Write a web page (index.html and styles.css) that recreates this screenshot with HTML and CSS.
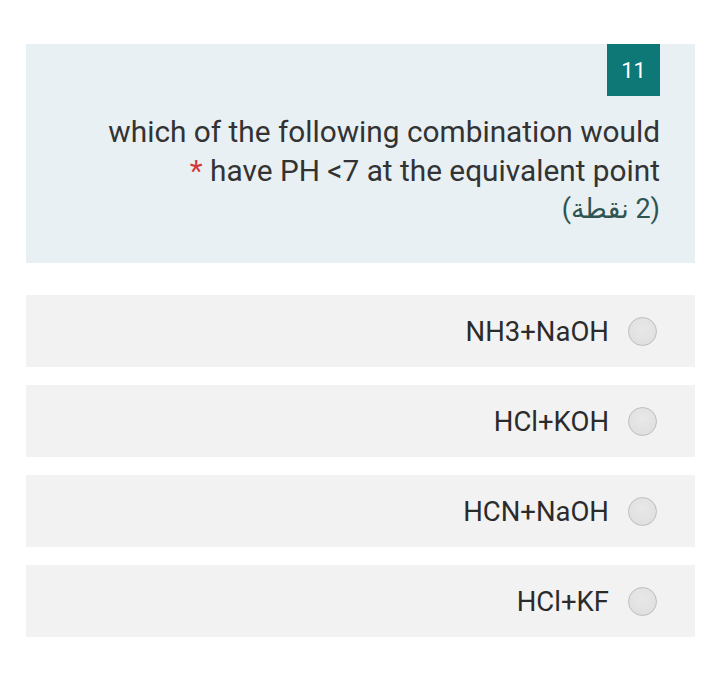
FILE: index.html
```html
<!DOCTYPE html>
<html lang="en">
<head>
<meta charset="utf-8">
<link rel="stylesheet" href="styles.css">
</head>
<body>
<div class="page">
  <section class="question">
    <div class="badge">11</div>
    <div class="qtext">
      <div class="line">which of the following combination would</div>
      <div class="line"><span class="req">*</span> have PH &lt;7 at the equivalent point</div>
      <div class="line points" dir="rtl">(2 نقطة)</div>
    </div>
  </section>
  <div class="options">
    <label class="option"><span class="otext">NH3+NaOH</span><span class="radio"></span></label>
    <label class="option"><span class="otext">HCl+KOH</span><span class="radio"></span></label>
    <label class="option"><span class="otext">HCN+NaOH</span><span class="radio"></span></label>
    <label class="option"><span class="otext">HCl+KF</span><span class="radio"></span></label>
  </div>
</div>
</body>
</html>
```

FILE: styles.css
```css
html, body {
  margin: 0;
  padding: 0;
  background: #ffffff;
}
body {
  font-family: Roboto, "Noto Sans", "DejaVu Sans", sans-serif;
  color: #333333;
}
.page {
  padding: 44px 25px 0 26px;
  width: 669px;
}
.question {
  background: #e8f0f3;
  height: 219px;
  box-sizing: border-box;
  padding-right: 35px;
  display: flex;
  flex-direction: column;
  align-items: flex-end;
}
.badge {
  width: 53px;
  height: 52px;
  background: #0e7876;
  color: #ffffff;
  font-size: 22px;
  display: flex;
  align-items: center;
  justify-content: center;
}
.qtext {
  margin-top: 16px;
  text-align: right;
  font-size: 29.8px;
  line-height: 39px;
  color: #333333;
}
.req {
  color: #d13a3a;
}
.points {
  color: #2f5452;
  font-family: Roboto, "DejaVu Sans", sans-serif;
  font-size: 27px;
}
.options {
  margin-top: 32px;
  display: flex;
  flex-direction: column;
  gap: 18px;
}
.option {
  height: 72px;
  background: #f2f2f2;
  display: flex;
  align-items: center;
  justify-content: flex-end;
  padding-right: 38px;
  gap: 19px;
}
.otext {
  font-size: 27.5px;
  color: #2b2b2b;
}
.radio {
  width: 27px;
  height: 27px;
  border-radius: 50%;
  border: 1px solid #bdbdbd;
  background: radial-gradient(circle at 50% 40%, #e8e8e8 0%, #dddddd 100%);
}
```
